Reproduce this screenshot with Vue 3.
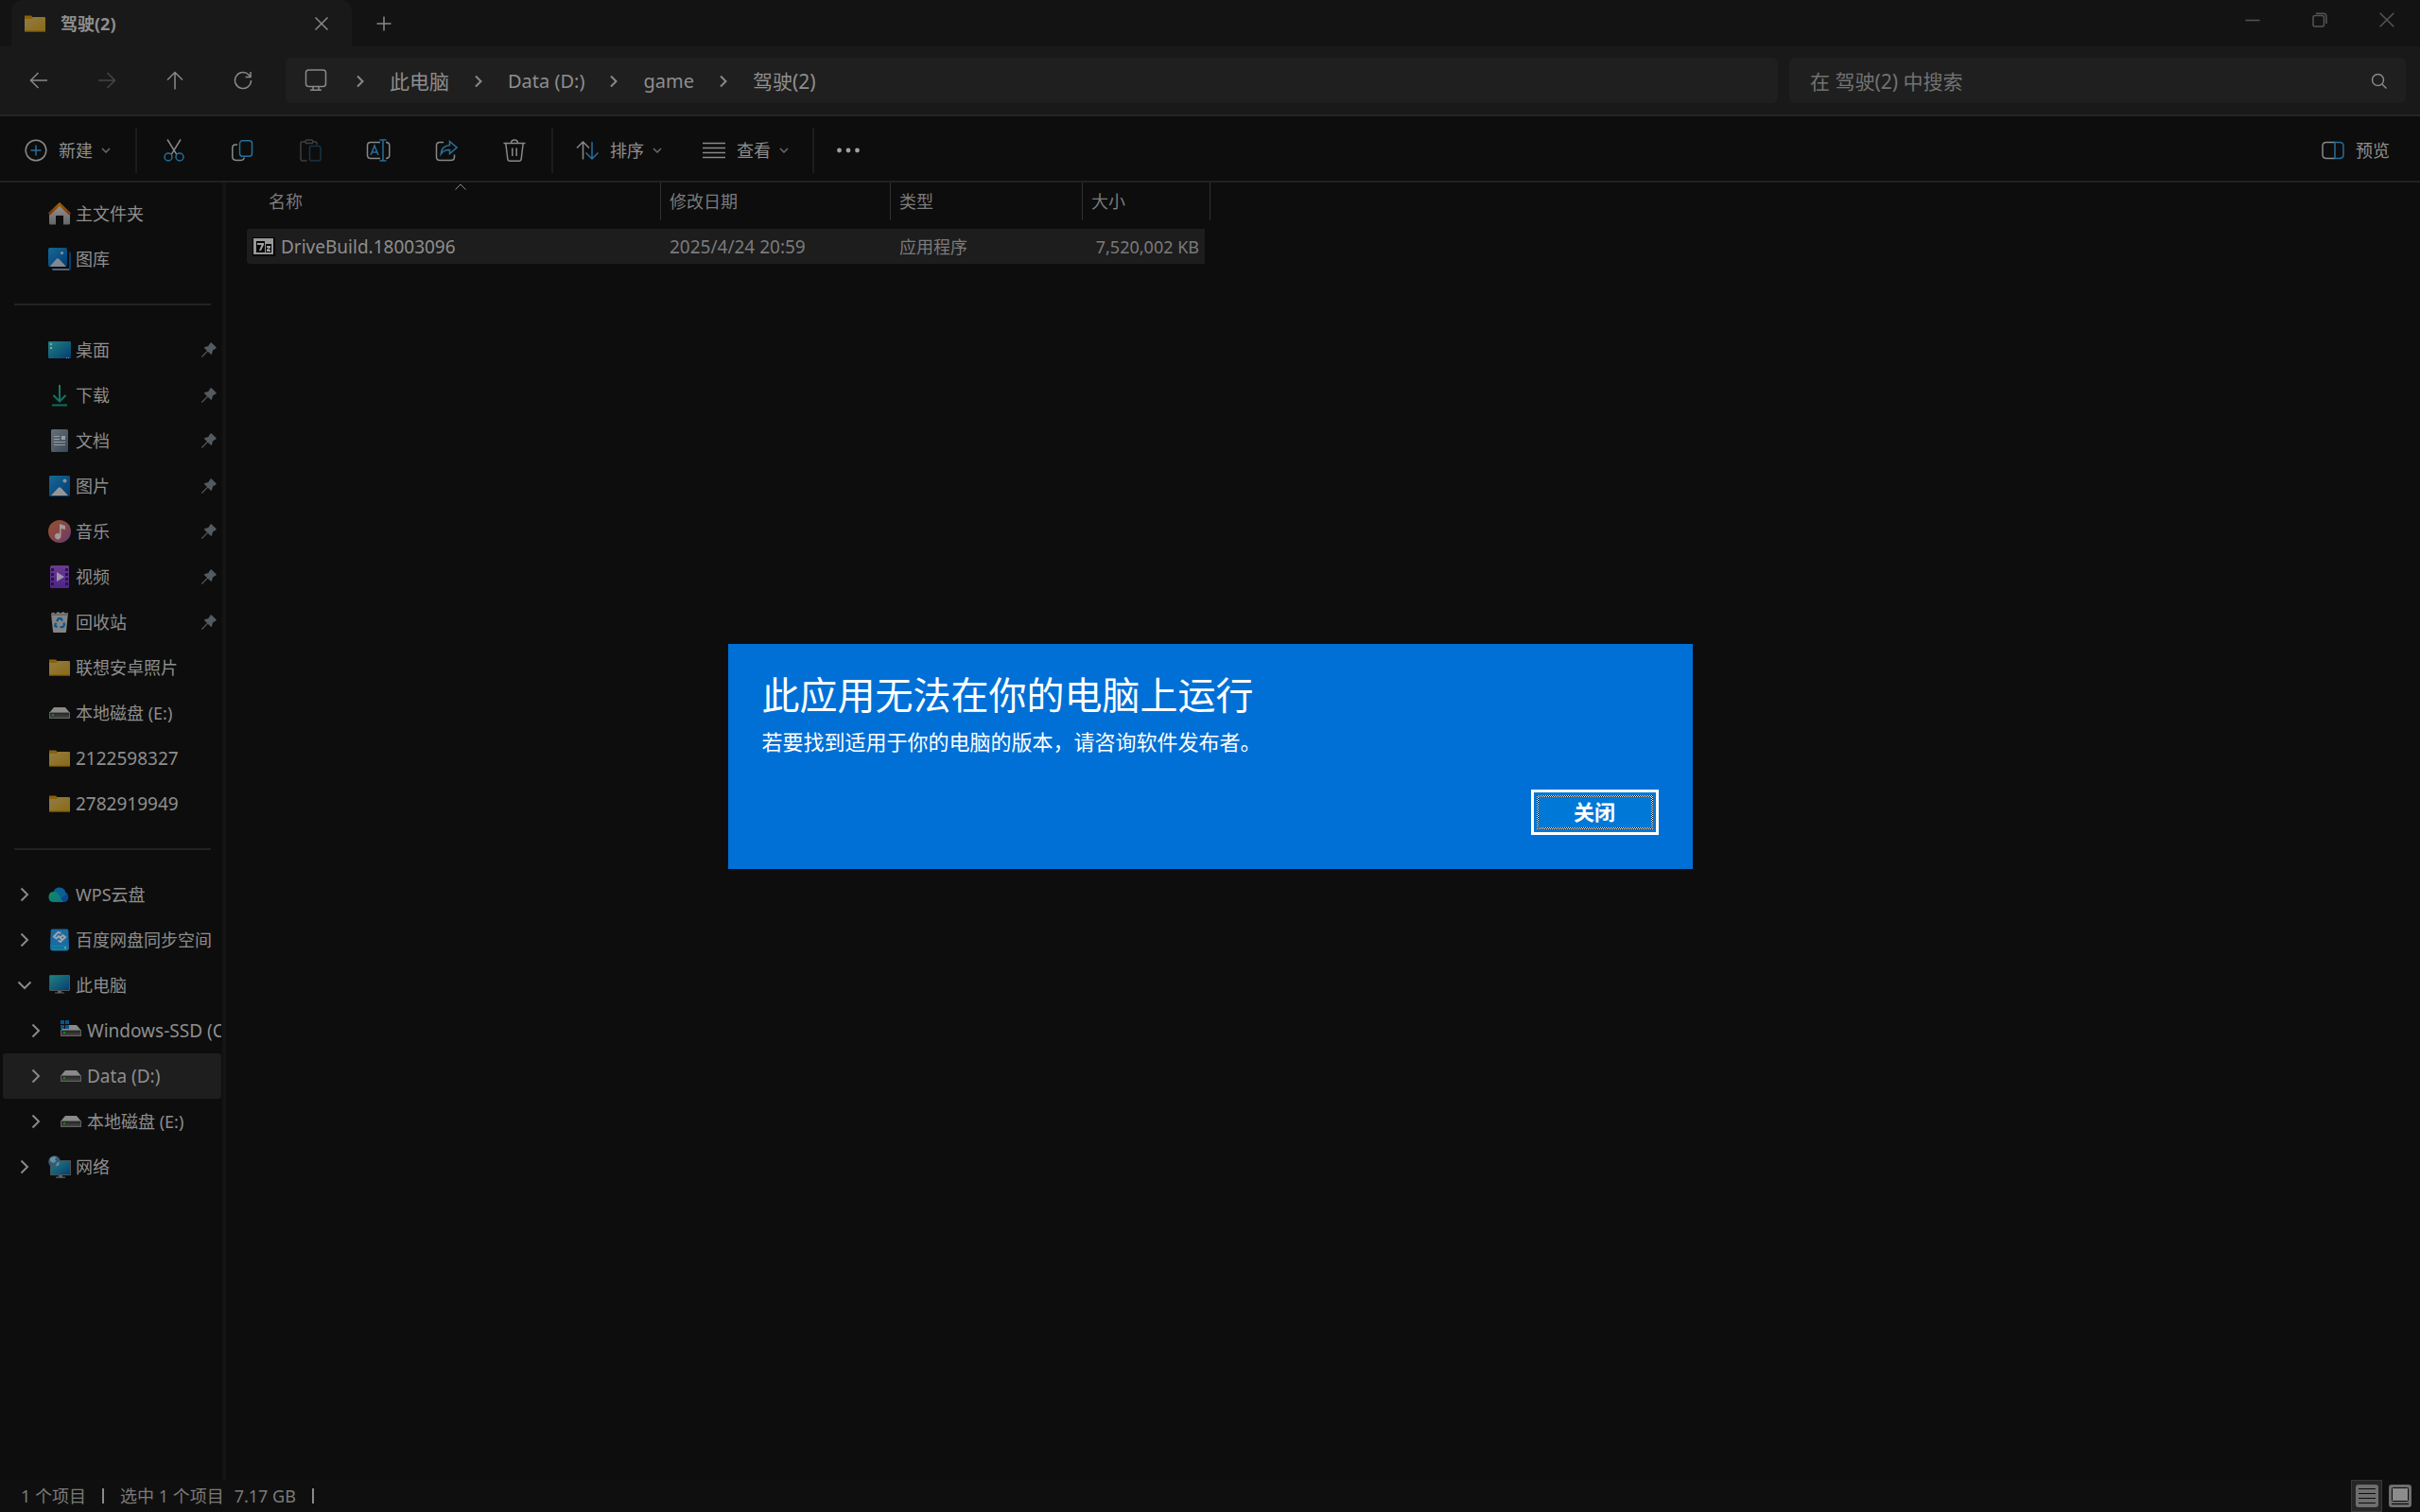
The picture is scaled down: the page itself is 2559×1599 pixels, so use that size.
<template>
  <div class="explorer">
    <header class="title-bar">
      <div class="tab">
        <svg class="icon"><use href="#i-folder" /></svg>
        <span class="tab-title">驾驶(2)</span>
        <button type="button" class="tab-close" aria-label="关闭标签页">
          <svg viewBox="0 0 14 14" class="glyph-14"><path d="M0.5 0.5 13.5 13.5M13.5 0.5 0.5 13.5" /></svg>
        </button>
      </div>
      <button type="button" class="tab-add" aria-label="新建标签页">
        <svg viewBox="0 0 16 16" class="glyph-16"><path d="M8 0.5V15.5M0.5 8H15.5" /></svg>
      </button>
      <div class="window-controls">
        <button type="button" aria-label="最小化">
          <svg viewBox="0 0 16 16" class="glyph-16"><path d="M0.5 8.5H15.5" /></svg>
        </button>
        <button type="button" aria-label="还原">
          <svg viewBox="0 0 16 16" class="glyph-16">
            <rect x="1" y="3.5" width="11.5" height="11.5" rx="2" />
            <path d="M4 1.2H11.5Q15 1.2 15 4.7V12" />
          </svg>
        </button>
        <button type="button" aria-label="关闭">
          <svg viewBox="0 0 16 16" class="glyph-16"><path d="M0.7 0.7 15.3 15.3M15.3 0.7 0.7 15.3" /></svg>
        </button>
      </div>
    </header>

    <div class="nav-bar">
      <div class="nav-buttons">
        <button type="button" aria-label="后退">
          <svg viewBox="0 0 24 24" class="glyph"><path d="M21 12H3.5M11.5 4 3.5 12 11.5 20" /></svg>
        </button>
        <button type="button" class="disabled" aria-label="前进" disabled>
          <svg viewBox="0 0 24 24" class="glyph"><path d="M3 12H20.5M12.5 4 20.5 12 12.5 20" /></svg>
        </button>
        <button type="button" aria-label="上移">
          <svg viewBox="0 0 24 24" class="glyph"><path d="M12 21.5V4M4 11.5 12 3.5 20 11.5" /></svg>
        </button>
        <button type="button" aria-label="刷新">
          <svg viewBox="0 0 24 24" class="glyph"><path d="M20.5 12A8.5 8.5 0 1 1 18.2 6.2L20 8.2M20 3V8.5H14.5" /></svg>
        </button>
      </div>
      <nav class="address">
        <svg viewBox="0 0 24 24" class="glyph pc"><rect x="1.5" y="1" width="21" height="17.5" rx="3" /><path d="M9 18.5V22M15 18.5V22M6 22.2H18" /></svg>
        <template v-for="crumb in crumbs" :key="crumb.label">
          <svg viewBox="0 0 8 14" class="crumb-arrow"><path d="M1 1.5 6.5 7 1 12.5" /></svg>
          <a href="#" :class="{ 'crumb-latin': crumb.latin }">{{ crumb.label }}</a>
        </template>
      </nav>
      <label class="search">
        <input type="text" aria-label="搜索" placeholder="在 驾驶(2) 中搜索" />
        <svg viewBox="0 0 18 18" class="glyph-search"><circle cx="7.5" cy="7.5" r="6" /><path d="M12 12 16.5 16.5" /></svg>
      </label>
    </div>

    <div class="command-bar">
      <button type="button" class="cmd">
        <svg viewBox="0 0 24 24" class="glyph"><circle cx="12" cy="12" r="10.8" /><path class="accent" d="M12 6.5V17.5M6.5 12H17.5" /></svg>
        <span>新建</span>
        <svg viewBox="0 0 10 6" class="drop"><path d="M1 1 5 5 9 1" /></svg>
      </button>
      <i class="sep"></i>
      <div class="cmd-icons">
        <button type="button" aria-label="剪切">
          <svg viewBox="0 0 24 24" class="glyph"><path d="M5 0.5 14.8 16.3M19 0.5 9.2 16.3" /><g class="accent"><circle cx="6" cy="19" r="4" /><circle cx="18" cy="19" r="4" /></g></svg>
        </button>
        <button type="button" aria-label="复制">
          <svg viewBox="0 0 24 24" class="glyph"><path d="M7 6H5Q1.8 6 1.8 9.5V18.5Q1.8 22.5 6 22.5H10Q14 22.5 14.2 19.5" /><rect class="accent" x="9.5" y="1.8" width="13" height="16.5" rx="3" /></svg>
        </button>
        <button type="button" class="disabled" aria-label="粘贴" disabled>
          <svg viewBox="0 0 24 24" class="glyph"><path d="M7 3H3.5Q2 3 2 5V21Q2 23 4 23H8.5M15 3H17.5Q19 3 19 5V6" /><rect x="7" y="1" width="8" height="3.6" rx="1.8" /><rect class="accent" x="11.5" y="7.5" width="11.5" height="15.5" rx="2" /></svg>
        </button>
        <button type="button" aria-label="重命名">
          <svg viewBox="0 0 26 24" class="glyph wide"><path d="M15 3.5H5Q1.5 3.5 1.5 7V17Q1.5 20.5 5 20.5H15M21 3.5Q24.8 3.5 24.8 7V17Q24.8 20.5 21 20.5" /><path class="accent" d="M5 17 9 7 13 17M6.4 14H11.6M14.5 1H21.5M14.5 23H21.5M18 1V23" /></svg>
        </button>
        <button type="button" aria-label="共享">
          <svg viewBox="0 0 24 24" class="glyph"><path d="M9 3.5H5Q1.5 3.5 1.5 7V19Q1.5 22.5 5 22.5H17Q20.5 22.5 20.5 19V16.5" /><path class="accent" d="M15.5 2.5 23 9 15.5 15.5V11.5Q9.5 11.2 6.2 16Q7 7.2 15.5 6.5Z" /></svg>
        </button>
        <button type="button" aria-label="删除">
          <svg viewBox="0 0 24 24" class="glyph"><path d="M0.5 4.5H23.5M2.8 4.5 4.8 21Q5 23.2 7.2 23.2H16.8Q19 23.2 19.2 21L21.2 4.5M8.5 4.5Q8.5 1 12 1T15.5 4.5M9.8 9.5V18M14.2 9.5V18" /></svg>
        </button>
      </div>
      <i class="sep"></i>
      <button type="button" class="cmd wide-cmd">
        <svg viewBox="0 0 24 24" class="glyph"><path d="M7.5 21.5V3M1 9.5 7.5 3 14 9.5" /><path class="accent" d="M17 3V21M10.5 14.5 17 21 23.5 14.5" /></svg>
        <span>排序</span>
        <svg viewBox="0 0 10 6" class="drop"><path d="M1 1 5 5 9 1" /></svg>
      </button>
      <button type="button" class="cmd wide-cmd">
        <svg viewBox="0 0 24 24" class="glyph"><path d="M0 4.5H24M0 9.5H24M0 14.5H24M0 19.5H24" /></svg>
        <span>查看</span>
        <svg viewBox="0 0 10 6" class="drop"><path d="M1 1 5 5 9 1" /></svg>
      </button>
      <i class="sep last-sep"></i>
      <button type="button" class="more" aria-label="更多">
        <svg viewBox="0 0 24 24" class="dots"><circle cx="2.5" cy="12" r="2.4" /><circle cx="12" cy="12" r="2.4" /><circle cx="21.5" cy="12" r="2.4" /></svg>
      </button>
      <button type="button" class="cmd preview">
        <svg viewBox="0 0 24 24" class="glyph"><path d="M14 3.5H5Q1 3.5 1 7.5V16.5Q1 20.5 5 20.5H14" /><path class="accent" d="M14 3.5H19Q23 3.5 23 7.5V16.5Q23 20.5 19 20.5H14Z" /></svg>
        <span>预览</span>
      </button>
    </div>

    <div class="body">
      <aside class="sidebar">
        <template v-for="(group, gi) in groups" :key="gi">
          <div v-if="gi" class="group-line"><hr /></div>
          <div
            v-for="item in group"
            :key="item.label"
            class="side-row"
            :class="{ nested: item.nested, active: item.active }"
          >
            <button v-if="item.expand" type="button" class="expander" :aria-label="'展开 ' + item.label">
              <svg v-if="item.expand === 'open'" viewBox="0 0 16 16" class="arrow"><path d="M1.5 4.5 8 11 14.5 4.5" /></svg>
              <svg v-else viewBox="0 0 16 16" class="arrow"><path d="M4.5 1.5 11 8 4.5 14.5" /></svg>
            </button>
            <span v-else class="expander"></span>
            <a href="#" class="side-link">
              <svg class="icon"><use :href="'#i-' + item.icon" /></svg>
              <span class="side-label" :class="{ latin: item.latin }">{{ item.label }}</span>
            </a>
            <svg v-if="item.pinned" viewBox="0 0 16 16" class="pin">
              <path d="M9.5 0.6Q10.2 0 11 .7L15.4 5.1Q16.2 6 15.2 6.5L12 8.6 11 12.3Q10.6 13.4 9.7 12.6L6.8 9.8 1.2 15.6 0 15.9.2 14.8 6 9 3.2 6.2Q2.6 5.3 3.6 4.9L7.3 4Z" />
            </svg>
          </div>
        </template>
      </aside>

      <main class="files">
        <table>
          <thead>
            <tr>
              <th class="col-name">
                <span>名称</span>
                <svg viewBox="0 0 12 7" class="sort-mark"><path d="M0.5 6.5 6 1 11.5 6.5" /></svg>
              </th>
              <th class="col-date">修改日期</th>
              <th class="col-type">类型</th>
              <th class="col-size">大小</th>
            </tr>
          </thead>
          <tbody>
            <tr v-for="file in files" :key="file.name">
              <td class="file-name">
                <div>
                  <svg class="icon"><use href="#i-sfx" /></svg>
                  <span>{{ file.name }}</span>
                </div>
              </td>
              <td class="latin">{{ file.date }}</td>
              <td>{{ file.type }}</td>
              <td class="file-size">{{ file.size }}</td>
            </tr>
          </tbody>
        </table>
      </main>
    </div>

    <footer class="status-bar">
      <span>1 个项目</span>
      <i class="bar"></i>
      <span>选中 1 个项目</span>
      <span class="total">7.17 GB</span>
      <i class="bar"></i>
      <div class="view-modes">
        <button type="button" class="on" aria-label="详细信息">
          <svg viewBox="0 0 24 24" class="icon"><rect width="24" height="24" rx="3" fill="#6e6e6e" /><path d="M3 4.5H21M3 9.5H21M3 14.5H21M3 19.5H21" stroke="#0c0c0c" stroke-width="1.2" /></svg>
        </button>
        <button type="button" aria-label="大图标">
          <svg viewBox="0 0 24 24" class="icon"><rect width="24" height="24" rx="3" fill="#6e6e6e" /><rect x="3.5" y="3.5" width="17" height="14" rx="1" fill="#8c8c8c" stroke="#0c0c0c" /><path d="M3 20.5H21" stroke="#0c0c0c" stroke-width="1.2" /></svg>
        </button>
      </div>
    </footer>

    <div v-if="dialogOpen" class="overlay">
      <section class="dialog" role="alertdialog" aria-labelledby="dialog-title">
        <h1 id="dialog-title">此应用无法在你的电脑上运行</h1>
        <p>若要找到适用于你的电脑的版本，请咨询软件发布者。</p>
        <button type="button" class="dialog-close" @click="dialogOpen = false"><span>关闭</span></button>
      </section>
    </div>

    <svg class="sprite" aria-hidden="true">
      <defs>
        <linearGradient id="g-folder" x1="0" y1="0" x2="1" y2="1"><stop offset="0" stop-color="#947c46" /><stop offset="1" stop-color="#8a6a14" /></linearGradient>
        <linearGradient id="g-blue" x1="0" y1="0" x2="1" y2="1"><stop offset="0" stop-color="#156a94" /><stop offset="1" stop-color="#033a74" /></linearGradient>
        <linearGradient id="g-teal" x1="0" y1="0" x2="1" y2="1"><stop offset="0" stop-color="#20827f" /><stop offset="1" stop-color="#063c73" /></linearGradient>
        <linearGradient id="g-grey" x1="0" y1="0" x2="0" y2="1"><stop offset="0" stop-color="#929292" /><stop offset="1" stop-color="#646464" /></linearGradient>
        <linearGradient id="g-roof" x1="0" y1="0" x2="0" y2="1"><stop offset="0" stop-color="#9a6204" /><stop offset="1" stop-color="#842f08" /></linearGradient>
        <linearGradient id="g-doc" x1="0" y1="0" x2="1" y2="1"><stop offset="0" stop-color="#65707b" /><stop offset="1" stop-color="#394857" /></linearGradient>
        <linearGradient id="g-down" x1="0" y1="0" x2="0" y2="1"><stop offset="0" stop-color="#15835c" /><stop offset="1" stop-color="#0c6c60" /></linearGradient>
        <linearGradient id="g-music" x1="0" y1="0" x2="1" y2="1"><stop offset="0" stop-color="#8e522c" /><stop offset="0.55" stop-color="#87444c" /><stop offset="1" stop-color="#5e3b73" /></linearGradient>
        <linearGradient id="g-video" x1="0" y1="0" x2="0" y2="1"><stop offset="0" stop-color="#6a3c8f" /><stop offset="1" stop-color="#4d2588" /></linearGradient>
        <linearGradient id="g-cloud" x1="0" y1="0" x2="1" y2="1"><stop offset="0" stop-color="#158a5c" /><stop offset="1" stop-color="#08748c" /></linearGradient>
        <linearGradient id="g-drive" x1="0" y1="0" x2="0" y2="1"><stop offset="0" stop-color="#222222" /><stop offset="1" stop-color="#484848" /></linearGradient>
      </defs>
      <symbol id="i-folder" viewBox="0 0 24 24">
        <path d="M1 3.5H8L10 5.5V8H1Z" fill="#8b6108" />
        <path d="M1 7H8.5L10 5H22Q23 5 23 6V20H1Z" fill="url(#g-folder)" />
        <path d="M1 20H23" stroke="#836006" stroke-width="1.4" />
      </symbol>
      <symbol id="i-home" viewBox="0 0 24 24">
        <path d="M12 3 1 13V22Q1 23.5 2.5 23.5H8V14H16V23.5H21.5Q23 23.5 23 22V13Z" fill="url(#g-grey)" />
        <path d="M0.8 12.5 12 2 23.2 12.5" fill="none" stroke="url(#g-roof)" stroke-width="3" />
      </symbol>
      <symbol id="i-gallery" viewBox="0 0 24 24">
        <path d="M22 4Q24 4 24 6V22Q24 24 22 24H5Q3.5 24 3.5 22.5H22Z" fill="#063c73" />
        <path d="M4 22H22V24H5Z" fill="#4c617b" />
        <rect width="20" height="20" rx="2" fill="url(#g-blue)" />
        <path d="M1.5 20 8.5 12Q10 10.5 11.5 12L19 20Z" fill="#7e8a94" />
        <circle cx="14.5" cy="5.5" r="1.6" fill="#8b9197" />
      </symbol>
      <symbol id="i-desktop" viewBox="0 0 24 24">
        <rect y="3" width="24" height="18" rx="1" fill="url(#g-teal)" />
        <path d="M2 5H4V7H2ZM2 9H4V11H2Z" fill="#8fa5a5" />
        <path d="M19 20.5H22" stroke="#7f99b0" stroke-dasharray="1 1" />
      </symbol>
      <symbol id="i-download" viewBox="0 0 24 24">
        <path d="M12 1V18M5.5 12 12 18.5 18.5 12M4 22.5H20" fill="none" stroke="url(#g-down)" stroke-width="2" />
      </symbol>
      <symbol id="i-doc" viewBox="0 0 24 24">
        <rect x="3" width="18" height="24" rx="1.5" fill="url(#g-doc)" />
        <path d="M6 7.5H12M6 10.5H12M6 13.5H18M6 16.5H18" stroke="#979ca1" stroke-width="1.2" />
        <path d="M14 7H18V11H14Z" fill="#979ca1" />
      </symbol>
      <symbol id="i-picture" viewBox="0 0 24 24">
        <rect x="1" y="1" width="22" height="22" rx="1.5" fill="url(#g-blue)" />
        <path d="M3 22 10.5 14Q12 12.5 13.5 14L21 22Z" fill="#949799" />
        <circle cx="17.5" cy="6.5" r="2" fill="#8b9197" />
      </symbol>
      <symbol id="i-music" viewBox="0 0 24 24">
        <circle cx="12" cy="12" r="12" fill="url(#g-music)" />
        <path d="M12 4 18 6V10L13.5 9V17A3.3 3.3 0 1 1 12 14.4Z" fill="#a09a99" />
      </symbol>
      <symbol id="i-video" viewBox="0 0 24 24">
        <rect x="2" width="20" height="24" rx="1.5" fill="url(#g-video)" />
        <path d="M3 3H6V6H3ZM3 8H6V11H3ZM3 13H6V16H3ZM3 18H6V21H3ZM18 3H21V6H18ZM18 8H21V11H18ZM18 13H21V16H18ZM18 18H21V21H18Z" fill="#29134a" />
        <path d="M9 7V17L17 12Z" fill="#a096ab" />
      </symbol>
      <symbol id="i-bin" viewBox="0 0 24 24">
        <path d="M3 3 5 1.5 8 3 10 1 13 2.5 16 1 18 2.5 21 2 19 22Q19 23 18 23H6Q5 23 5 22Z" fill="#848484" />
        <path d="M3 3H21L20.8 5H3.2Z" fill="#6a6a6a" />
        <path d="M9 11 11 8.2H13.5L15 10.5M16.5 12.5 17 15 15.5 17.2H12.5M9.5 17.2 7.2 16 8 12.8" fill="none" stroke="#0c568e" stroke-width="2.2" />
      </symbol>
      <symbol id="i-drive" viewBox="0 0 24 24">
        <path d="M6 6H18L23 12H1Z" fill="#8a8a8a" />
        <rect x="1.5" y="11.5" width="21" height="6" fill="url(#g-drive)" stroke="#606060" />
        <rect x="4" y="13" width="2" height="2" fill="#128a12" />
      </symbol>
      <symbol id="i-system" viewBox="0 0 24 24">
        <path d="M6 6H18L23 12H1Z" fill="#8a8a8a" />
        <rect x="1.5" y="11.5" width="21" height="6" fill="url(#g-drive)" stroke="#606060" />
        <rect x="4" y="13" width="2" height="2" fill="#128a12" />
        <path d="M0 0H10V10H0Z" fill="#0d0d0d" />
        <path d="M1 1H5V5H1ZM6 1H10V5H6ZM1 6H5V10H1ZM6 6H10V10H6Z" fill="#06568b" />
      </symbol>
      <symbol id="i-wps" viewBox="0 0 24 24">
        <path d="M5.5 9A6.5 6.5 0 0 1 18 9.5 5.8 5.8 0 0 1 18 20H10Z" fill="#084690" />
        <path d="M6 9A6.5 6.5 0 0 1 17.5 7.5L19 12 12 17Z" fill="#0d6090" />
        <path d="M6 9Q9 9 11 12L16 20H6Q0.5 20 0.5 14.5T6 9Z" fill="url(#g-cloud)" />
      </symbol>
      <symbol id="i-baidu" viewBox="0 0 24 24">
        <path d="M4 .5H20Q21 .5 21.3 2L22 20Q22 23.5 19 23.5H5Q2 23.5 2 20L2.7 2Q3 .5 4 .5Z" fill="#1b6aa2" />
        <path d="M3.5 18.5H20.5M3.5 22H20.5" stroke="#10869e" stroke-width="1.3" />
        <path d="M13.5 5 10.5 3.8 6 8.5 8.5 10.5 11 8 14.5 11.5M10.5 12.5 13 14 18 9 15.5 7 13 9.2" fill="none" stroke="#a0a4a8" stroke-width="1.9" />
        <circle cx="18" cy="20.3" r="1" fill="#8fa7b5" />
      </symbol>
      <symbol id="i-pc" viewBox="0 0 24 24">
        <rect x="1.5" y="1.5" width="21" height="16" rx="0.5" fill="url(#g-teal)" stroke="#4b5358" />
        <path d="M10 18H14V19.5H17V20.5H7V19.5H10Z" fill="#5b646a" />
      </symbol>
      <symbol id="i-network" viewBox="0 0 24 24">
        <rect x="2.5" y="5.5" width="21" height="15" fill="url(#g-teal)" stroke="#4b5358" />
        <path d="M11 21H15V22.5H18V23.8H8V22.5H11Z" fill="#5b646a" />
        <circle cx="6.5" cy="6.5" r="6.3" fill="#2f5f7a" />
        <path d="M2 3Q5 0 9 1.5L7 4 8.5 6 5.5 8 2 6ZM9 8 12 6.5 11 10.5 8 11.5Z" fill="#718d9b" />
      </symbol>
      <symbol id="i-sfx" viewBox="0 0 24 24">
        <rect y="2" width="24" height="20" fill="#050505" />
        <rect x="1" y="3" width="21" height="17" fill="#989898" />
        <path d="M4 6H13V18H4ZM14 9H20V18H14Z" fill="#050505" />
        <path d="M5 8H12V10L9 16H7L9.5 10H5ZM15 11H19V13L17 15H19V17H15V15L17 13H15Z" fill="#a0a0a0" />
      </symbol>
    </svg>
  </div>
</template>

<script setup>
import { ref } from 'vue';

const dialogOpen = ref(true);

const crumbs = [
  { label: '此电脑' },
  { label: 'Data (D:)', latin: true },
  { label: 'game', latin: true },
  { label: '驾驶(2)' }
];

const groups = [
  [
    { label: '主文件夹', icon: 'home' },
    { label: '图库', icon: 'gallery' }
  ],
  [
    { label: '桌面', icon: 'desktop', pinned: true },
    { label: '下载', icon: 'download', pinned: true },
    { label: '文档', icon: 'doc', pinned: true },
    { label: '图片', icon: 'picture', pinned: true },
    { label: '音乐', icon: 'music', pinned: true },
    { label: '视频', icon: 'video', pinned: true },
    { label: '回收站', icon: 'bin', pinned: true },
    { label: '联想安卓照片', icon: 'folder' },
    { label: '本地磁盘 (E:)', icon: 'drive' },
    { label: '2122598327', icon: 'folder', latin: true },
    { label: '2782919949', icon: 'folder', latin: true }
  ],
  [
    { label: 'WPS云盘', icon: 'wps', expand: 'closed' },
    { label: '百度网盘同步空间', icon: 'baidu', expand: 'closed' },
    { label: '此电脑', icon: 'pc', expand: 'open' },
    { label: 'Windows-SSD (C:)', icon: 'system', expand: 'closed', nested: true, latin: true },
    { label: 'Data (D:)', icon: 'drive', expand: 'closed', nested: true, active: true, latin: true },
    { label: '本地磁盘 (E:)', icon: 'drive', expand: 'closed', nested: true },
    { label: '网络', icon: 'network', expand: 'closed' }
  ]
];

const files = [
  { name: 'DriveBuild.18003096', date: '2025/4/24 20:59', type: '应用程序', size: '7,520,002 KB' }
];
</script>

<style>
body {
  margin: 0;
  background: #0d0d0d;
}
</style>

<style scoped>
.explorer {
  display: flex;
  flex-direction: column;
  min-height: 100vh;
  background: #0d0d0d;
  color: #8e8e8e;
  font-family: 'Noto Sans', 'Noto Sans CJK SC', sans-serif;
  font-size: 18px;
  line-height: 24px;
}

.explorer * {
  box-sizing: border-box;
}

button {
  display: flex;
  align-items: center;
  justify-content: center;
  padding: 0;
  border: none;
  background: none;
  color: inherit;
  font: inherit;
}

a {
  color: inherit;
  text-decoration: none;
}

svg {
  display: block;
  flex: none;
}

.icon {
  width: 24px;
  height: 24px;
}

.glyph,
.glyph-14,
.glyph-16,
.glyph-search,
.crumb-arrow,
.drop,
.arrow,
.sort-mark {
  width: 24px;
  height: 24px;
  fill: none;
  stroke: #898989;
  stroke-width: 1.5;
}

.glyph .accent {
  stroke: #276f9b;
}

.glyph.wide {
  width: 26px;
}

.glyph-14 {
  width: 14px;
  height: 14px;
}

.glyph-16 {
  width: 16px;
  height: 16px;
}

.glyph-search {
  width: 18px;
  height: 18px;
}

.disabled {
  opacity: 0.4;
}

/* title bar */
.title-bar {
  display: flex;
  height: 49px;
  padding-left: 12px;
  background: #131313;
}

.tab {
  display: flex;
  align-items: center;
  width: 360px;
  padding: 0 12px 0 13px;
  border-radius: 12px 12px 0 0;
  background: #191919;
}

.tab-title {
  flex: 1;
  margin-left: 15px;
  font-weight: 700;
  font-size: 18px;
}

.tab-close {
  width: 40px;
  height: 36px;
}

.tab-add {
  width: 68px;
}

.window-controls {
  display: flex;
  height: 42px;
  margin-left: auto;
}

.window-controls button {
  width: 71px;
}

.window-controls svg {
  stroke: #555555;
}

/* navigation */
.nav-bar {
  display: flex;
  align-items: center;
  height: 74px;
  padding: 0 15px 0 5px;
  border-bottom: 2px solid #252525;
  background: #191919;
}

.nav-buttons {
  display: flex;
  width: 297px;
}

.nav-buttons button {
  width: 72px;
  height: 48px;
}

.address {
  display: flex;
  align-items: center;
  flex: 1;
  height: 48px;
  padding-left: 20px;
  border-radius: 6px;
  background: #1f1f1f;
  font-size: 21px;
}

.address a {
  padding-top: 2px;
}

.crumb-latin {
  font-size: 20px;
}

.pc {
  margin-right: 4px;
}

.crumb-arrow {
  width: 8px;
  height: 14px;
  margin: 2px 27px 0;
  stroke-width: 2;
}

.search {
  display: flex;
  align-items: center;
  width: 652px;
  height: 48px;
  margin-left: 12px;
  padding: 2px 19px 0 22px;
  border-radius: 6px;
  background: #1f1f1f;
}

.search input {
  flex: 1;
  min-width: 0;
  padding: 0;
  border: none;
  outline: none;
  background: none;
  font: inherit;
  font-size: 21px;
}

.search input::placeholder {
  color: #727272;
  opacity: 1;
}

/* commands */
.command-bar {
  display: flex;
  align-items: center;
  height: 70px;
  padding: 4px 0 0 26px;
  border-bottom: 2px solid #212121;
}

.cmd {
  height: 48px;
}

.cmd span {
  margin-left: 12px;
}

.drop {
  width: 10px;
  height: 6px;
  margin: 0 26px 0 9px;
  stroke: #6a6a6a;
}

.sep {
  width: 2px;
  height: 48px;
  background: #1c1c1c;
}

.last-sep {
  margin-left: 6px;
}

.cmd-icons {
  display: flex;
  padding: 0 3px;
}

.cmd-icons button {
  width: 72px;
  height: 48px;
}

.wide-cmd {
  margin-left: 24px;
}

.wide-cmd .drop {
  margin-right: 19px;
}

.more {
  width: 72px;
  height: 48px;
}

.dots {
  width: 24px;
  height: 24px;
  fill: #a0a0a0;
}

.preview {
  margin-left: auto;
  padding-right: 32px;
}

/* sidebar */
.body {
  display: flex;
  flex: 1;
}

.sidebar {
  flex: none;
  width: 239px;
  padding: 9px 1px 9px 3px;
  border-right: 4px solid #141414;
}

.group-line {
  display: flex;
  align-items: center;
  height: 48px;
  padding: 0 11px 0 12px;
}

.group-line hr {
  flex: 1;
  height: 2px;
  margin: 0;
  border: none;
  background: #222222;
}

.side-row {
  display: flex;
  align-items: center;
  height: 48px;
  padding-right: 5px;
  border-radius: 3px;
}

.side-row.nested {
  padding-right: 0;
  padding-left: 12px;
}

.side-row.active {
  background: #1e1e1e;
}

.expander {
  flex: none;
  width: 46px;
  height: 24px;
}

.arrow {
  width: 16px;
  height: 16px;
  stroke-width: 2;
}

.side-link {
  display: flex;
  align-items: center;
  flex: 1;
  min-width: 0;
  margin-left: 2px;
}

.side-label {
  margin-left: 5px;
  overflow: hidden;
  white-space: nowrap;
}

.latin {
  font-size: 19px;
}

.pin {
  width: 16px;
  height: 16px;
  fill: #535b61;
}

/* file list */
.files {
  flex: 1;
  min-width: 0;
  padding-left: 22px;
}

table {
  table-layout: fixed;
  width: 1019px;
  border-collapse: separate;
  border-spacing: 0;
  color: #7b7b7b;
}

thead::after {
  content: '';
  display: block;
  height: 9px;
}

th {
  height: 40px;
  padding: 0 0 0 9px;
  border-right: 1px solid #303030;
  text-align: left;
  font-weight: 400;
}

.col-name {
  position: relative;
  width: 438px;
  padding-left: 23px;
}

.sort-mark {
  position: absolute;
  top: 1px;
  left: 220px;
  width: 12px;
  height: 7px;
  stroke-width: 1;
}

.col-date {
  width: 243px;
}

.col-type {
  width: 203px;
}

td {
  height: 37px;
  padding: 0 0 0 9px;
  background: #1d1d1d;
}

.file-name {
  padding-left: 6px;
  border-radius: 3px 0 0 3px;
  color: #8e8e8e;
  font-size: 19px;
}

.file-name div {
  display: flex;
  align-items: center;
  gap: 6px;
}

td.file-size {
  padding-right: 6px;
  border-right: 6px solid transparent;
  background-clip: padding-box;
  text-align: right;
}

/* status */
.status-bar {
  display: flex;
  align-items: center;
  height: 34px;
  padding: 0 5px 0 22px;
  background: #0f0f0f;
  color: #7b7b7b;
}

.bar {
  width: 2px;
  height: 16px;
  margin: 0 17px;
  background: #8a8a8a;
}

.total {
  margin-left: 11px;
}

.view-modes {
  display: flex;
  gap: 2px;
  margin-left: auto;
}

.view-modes button {
  width: 33px;
  height: 34px;
}

.view-modes .on {
  border: 1px solid #383838;
  background: #262626;
}

/* dialog */
.overlay {
  position: fixed;
  inset: 0;
  display: flex;
  align-items: center;
  justify-content: center;
}

.dialog {
  display: flex;
  flex-direction: column;
  width: 1020px;
  padding: 26px 36px 36px;
  background: #0070d6;
  color: #ffffff;
}

.dialog h1 {
  margin: 0;
  font-weight: 400;
  font-size: 40px;
  line-height: 56px;
}

.dialog p {
  margin: 6px 0 36px;
  font-size: 22px;
  line-height: 30px;
}

.dialog-close {
  align-self: flex-end;
  width: 135px;
  height: 48px;
  padding: 3px;
  border: 3px solid #ffffff;
  background: #0078d7;
  font-weight: 700;
  font-size: 22px;
}

/* checkered focus ring */
.dialog-close span {
  flex: 1;
  height: 36px;
  border: 2px solid transparent;
  background:
    linear-gradient(#0078d7, #0078d7) padding-box,
    repeating-conic-gradient(#ffffff 0 25%, #000000 0 50%) 0 0 / 2px 2px border-box;
  line-height: 30px;
}

.sprite {
  width: 0;
  height: 0;
}
</style>
